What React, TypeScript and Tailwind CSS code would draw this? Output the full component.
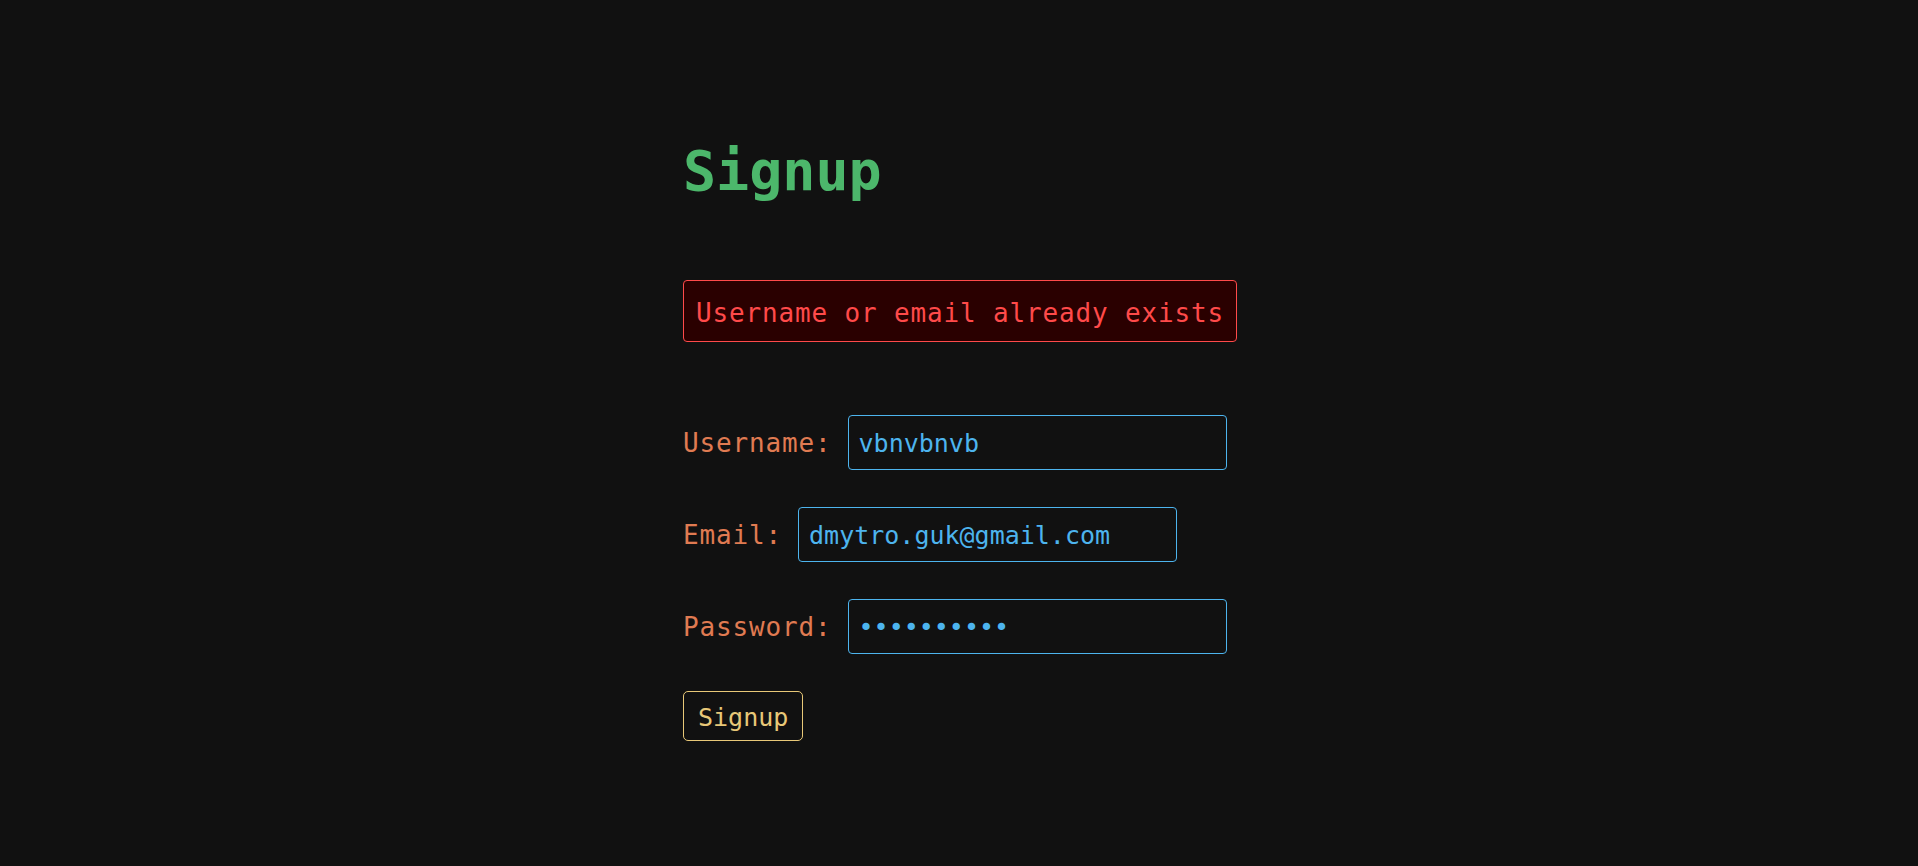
const mono = "font-['DejaVu_Sans_Mono','Liberation_Mono',monospace]";

const fields = [
  { label: "Username:", type: "text", value: "vbnvbnvb" },
  { label: "Email:", type: "email", value: "dmytro.guk@gmail.com" },
  { label: "Password:", type: "password", value: "qwertyuiop" },
];

export default function App() {
  return (
    <div className={`min-h-[866px] w-full bg-[#111111] ${mono}`}>
      <main className="mx-auto flex w-[552px] flex-col items-start pt-[139px]">
        {/* Title */}
        <h1 className="text-[55px] font-bold leading-[64px] text-[#4cb76b]">Signup</h1>

        {/* Error message */}
        <div className="mt-[77px] shrink-0 whitespace-nowrap rounded-[4px] border border-[#ff4a4a] bg-[#2a0000] px-[12px] pt-[17px] pb-[13px] text-[26px] leading-[30px] tracking-[0.85px] text-[#ff4a4a]">
          Username or email already exists
        </div>

        {/* Form */}
        <form className="mt-[73px] flex flex-col items-start gap-[37px]" onSubmit={(e) => e.preventDefault()}>
          {fields.map(({ label, type, value }) => (
            <div key={label} className="flex items-center gap-[16px]">
              <label className="whitespace-nowrap text-[26px] leading-[30px] tracking-[0.85px] text-[#e07b52]">{label}</label>
              <input
                type={type}
                defaultValue={value}
                readOnly
                className={`h-[55px] w-[379px] rounded-[4px] border border-[#4db4ee] bg-transparent px-[10px] pt-[2px] text-[25px] leading-[30px] text-[#4db4ee] outline-none ${mono}`}
              />
            </div>
          ))}
          <button
            type="submit"
            className={`rounded-[5px] border border-[#e8c878] bg-transparent px-[14px] pt-[11px] pb-[7px] text-[25px] leading-[30px] text-[#e8c878] ${mono}`}
          >
            Signup
          </button>
        </form>
      </main>
    </div>
  );
}
